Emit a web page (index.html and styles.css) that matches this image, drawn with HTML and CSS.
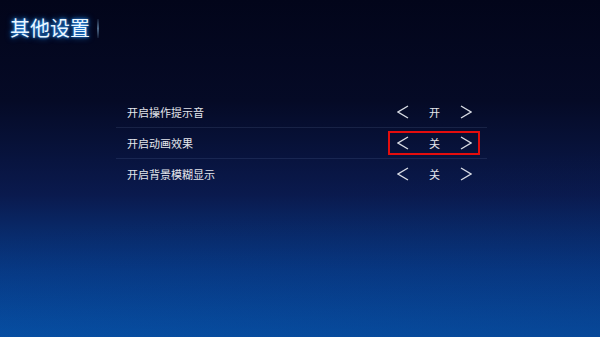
FILE: index.html
```html
<!DOCTYPE html>
<html lang="zh-CN">
<head>
  <meta charset="UTF-8" />
  <meta name="viewport" content="width=device-width, initial-scale=1.0"/>
  <title>其他设置</title>
  <link rel="stylesheet" href="styles.css">
</head>
<body>

  <div class="header">
    <h1 class="title">其他设置</h1>
    <span class="title-bar"></span>
  </div>

  <ul class="settings">
    <li class="row">
      <span class="label">开启操作提示音</span>
      <div class="switcher">
        <svg class="arrow" viewBox="0 0 12 14"><polyline points="11,1 1,7 11,13" /></svg>
        <span class="value">开</span>
        <svg class="arrow" viewBox="0 0 12 14"><polyline points="1,1 11,7 1,13" /></svg>
      </div>
    </li>
    <li class="row">
      <span class="label">开启动画效果</span>
      <div class="switcher focused">
        <svg class="arrow" viewBox="0 0 12 14"><polyline points="11,1 1,7 11,13" /></svg>
        <span class="value">关</span>
        <svg class="arrow" viewBox="0 0 12 14"><polyline points="1,1 11,7 1,13" /></svg>
      </div>
    </li>
    <li class="row">
      <span class="label">开启背景模糊显示</span>
      <div class="switcher">
        <svg class="arrow" viewBox="0 0 12 14"><polyline points="11,1 1,7 11,13" /></svg>
        <span class="value">关</span>
        <svg class="arrow" viewBox="0 0 12 14"><polyline points="1,1 11,7 1,13" /></svg>
      </div>
    </li>
  </ul>

</body>
</html>
```

FILE: styles.css
```css
html, body {
  height: 100%;
}

body {
  margin: 0;
  font-family: "Noto Sans CJK SC", "Noto Sans", sans-serif;
  color: #e4e6ec;
  background:
    linear-gradient(172deg, rgba(0,0,0,0) 55%, rgba(10,30,90,0.25) 100%),
    linear-gradient(180deg, #02051a 0%, #050a26 30%, #0a1a4e 58%, #073a86 80%, #0656ae 100%);
  overflow: hidden;
}

.header {
  display: flex;
  align-items: center;
  padding: 14px 0 0 10px;
}

.title {
  margin: 0;
  font-size: 20px;
  font-weight: normal;
  line-height: 28px;
  color: #eaf7ff;
  text-shadow: 0 0 3px #2e9bff, 0 0 6px #1c7fe6;
}

.title-bar {
  width: 2px;
  height: 19px;
  margin-left: 7px;
  background: linear-gradient(180deg, rgba(120,170,220,0.1), rgba(150,200,240,0.5), rgba(120,170,220,0.1));
}

.settings {
  list-style: none;
  margin: 55px 0 0 116px;
  padding: 0;
  width: 371px;
}

.row {
  display: flex;
  align-items: center;
  justify-content: space-between;
  height: 30px;
  padding: 0 7px 0 11px;
  border-bottom: 1px solid rgba(150,170,220,0.13);
  font-size: 11px;
}

.row:last-child {
  border-bottom: none;
}

.switcher {
  display: flex;
  align-items: center;
  justify-content: space-between;
  width: 92px;
  height: 24px;
  padding: 0 6px 0 7px;
  box-sizing: border-box;
  border: 2px solid transparent;
}

.switcher.focused {
  border-color: #e40d0d;
}

.arrow {
  width: 12px;
  height: 14px;
  fill: none;
  stroke: #d8dbe4;
  stroke-width: 1.4;
}

.value {
  font-size: 11px;
}
```
